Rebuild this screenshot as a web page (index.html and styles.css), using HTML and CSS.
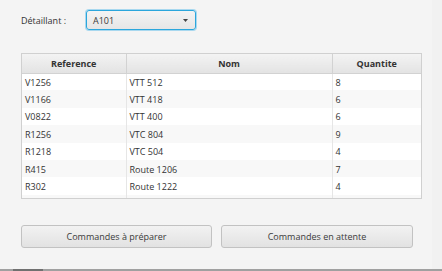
FILE: index.html
```html
<!DOCTYPE html>
<html>
<head>
<meta charset="utf-8">
<link rel="stylesheet" href="styles.css">
</head>
<body>
<div class="window">
  <div class="content">
    <div class="top">
      <span class="label">Détaillant :</span>
      <div class="combo">
        <span class="combo-text">A101</span>
        <svg class="arrow" width="5" height="3" viewBox="0 0 5 3"><path d="M0 0H5L2.5 3Z" fill="#444"/></svg>
      </div>
    </div>
    <div class="table">
      <table>
        <colgroup><col class="c1"><col class="c2"><col class="c3"></colgroup>
        <thead>
          <tr><th>Reference</th><th>Nom</th><th>Quantite</th></tr>
        </thead>
        <tbody>
          <tr><td>V1256</td><td>VTT 512</td><td>8</td></tr>
          <tr><td>V1166</td><td>VTT 418</td><td>6</td></tr>
          <tr><td>V0822</td><td>VTT 400</td><td>6</td></tr>
          <tr><td>R1256</td><td>VTC 804</td><td>9</td></tr>
          <tr><td>R1218</td><td>VTC 504</td><td>4</td></tr>
          <tr><td>R415</td><td>Route 1206</td><td>7</td></tr>
          <tr><td>R302</td><td>Route 1222</td><td>4</td></tr>
          <tr><td></td><td></td><td></td></tr>
        </tbody>
      </table>
    </div>
    <div class="buttons">
      <button class="btn b1">Commandes à préparer</button>
      <button class="btn b2">Commandes en attente</button>
    </div>
  </div>
  <div class="edge"></div>
</div>
<div class="taskbar"><span class="seg"></span></div>
</body>
</html>
```
FILE: styles.css
```css
* { box-sizing: border-box; }
html, body { margin: 0; padding: 0; }
body {
  width: 442px;
  height: 271px;
  overflow: hidden;
  background: #f4f4f4;
  font-family: "Open Sans", "Noto Sans", sans-serif;
  font-size: 9px;
  color: #333;
}
.window {
  display: flex;
  height: 269px;
}
.content {
  width: 432px;
  padding: 10px 0 0 21px;
}
.edge {
  width: 10px;
  background: #f1f1f1;
}
.top {
  display: flex;
  align-items: center;
  height: 20px;
}
.label {
  width: 65px;
  color: #333;
}
.combo {
  width: 110px;
  height: 20px;
  border: 1px solid #2ba6dc;
  border-radius: 3px;
  box-shadow: 0 0 0 1px #a8d8ef;
  background: linear-gradient(#f4f4f4, #e6e6e6);
  display: flex;
  align-items: center;
  justify-content: space-between;
  padding: 0 7px 0 6px;
  color: #3a3a3a;
}
.arrow { display: block; }
.table {
  margin-top: 23px;
  width: 401px;
  height: 146px;
  border: 1px solid #d0d0d0;
  overflow: hidden;
  background: #fff;
}
table {
  border-collapse: collapse;
  table-layout: fixed;
  width: 399px;
}
.c1 { width: 104px; }
.c2 { width: 206px; }
.c3 { width: 89px; }
th {
  height: 19px;
  padding: 0;
  font-weight: bold;
  text-align: center;
  background: linear-gradient(#f3f3f3, #e3e3e3);
  border-right: 1px solid #d2d2d2;
  border-bottom: 1px solid #d2d2d2;
  color: #333;
}
th:last-child { border-right: none; }
td {
  height: 17.4px;
  padding: 1px 0 0 3px;
  border-right: 1px solid #e6e6e6;
  white-space: nowrap;
  color: #333;
}
td:last-child { border-right: none; }
tbody tr:nth-child(odd) { background: #ffffff; }
tbody tr:nth-child(even) { background: #f8f8f8; }
.buttons {
  margin-top: 26px;
  display: flex;
  gap: 9px;
}
.btn {
  width: 191px;
  height: 23px;
  font-family: inherit;
  font-size: 9px;
  color: #3a3a3a;
  border: 1px solid #c2c2c2;
  border-radius: 3px;
  background: linear-gradient(#f2f2f2, #e2e2e2);
  padding: 0;
}
.b2 { width: 192px; }
.taskbar {
  height: 2px;
  background: #a0a0a0;
  position: relative;
}
.seg {
  position: absolute;
  left: 13px;
  top: 0;
  width: 30px;
  height: 2px;
  background: #707070;
}
```
